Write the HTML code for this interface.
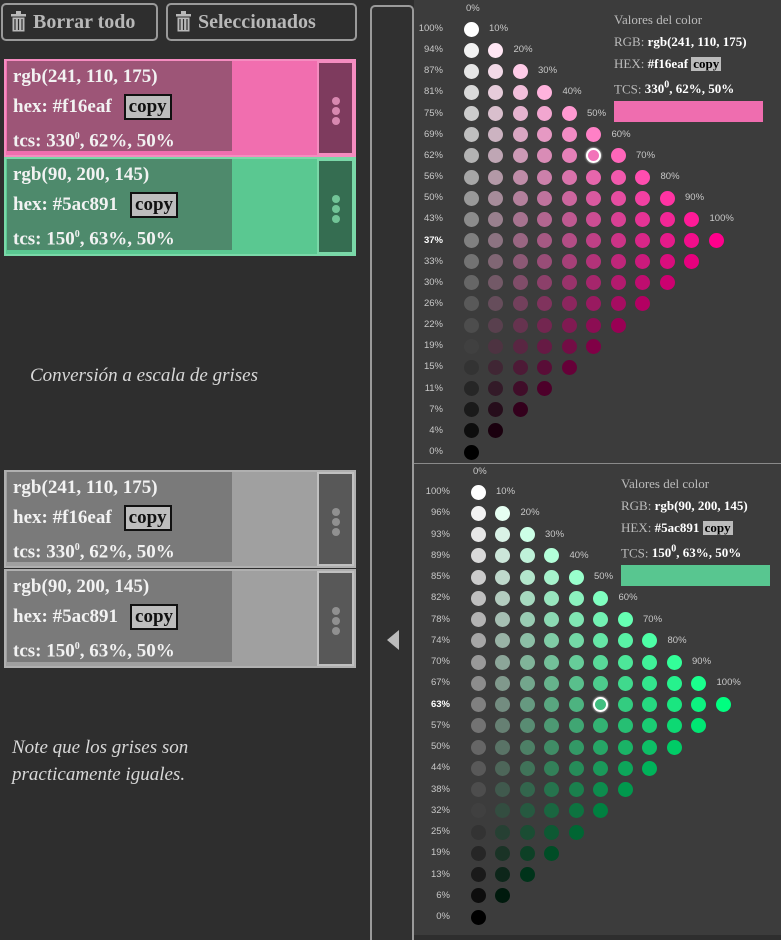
<!DOCTYPE html>
<html><head><meta charset="utf-8">
<style>
*{margin:0;padding:0;box-sizing:border-box}
body{width:781px;height:935px;background:#2e2e2e;position:relative;overflow:hidden;font-family:"Liberation Serif",serif}
.abs{position:absolute}
.btn{position:absolute;top:3px;height:38px;border:2px solid #9a9a9a;border-radius:5px;color:#b8b8b8;font-weight:bold;font-size:20px;line-height:34px;padding-left:30px}
.trash{position:absolute;left:8px;top:6px;width:15px;height:21px}
.card{position:absolute;left:4px;width:352px}
.txt{position:absolute;left:3px;top:2px;width:225px;color:#f2f2f2;font-size:19px;font-weight:bold;line-height:30px;padding:1px 6px}
.copy{display:inline-block;background:#bdbdbd;color:#111;border:2px solid #111;padding:0 3px;line-height:22px;margin-left:12px;font-size:19px}
.dots{position:absolute;right:2px;top:2px;width:37px;border:2px solid}
.dots i{position:absolute;left:13px;width:8px;height:8px;border-radius:50%}
.hand{position:absolute;color:#d8d8d8;font-family:"Liberation Serif",serif;font-style:italic;font-size:19px;line-height:27px}
.right{position:absolute;left:414px;width:367px;background:#3c3c3c}
.lbl{position:absolute;color:#c8c8c8;font-family:"Liberation Sans",sans-serif;font-size:9.5px;line-height:10px}
.dot{position:absolute;width:15px;height:15px;border-radius:50%}
.info{position:absolute;color:#bbb;font-size:14px;line-height:22px}
.info b{color:#fff}
sup{font-size:10px}
</style></head><body>

<div class="btn" style="left:1px;width:157px">
<svg class="trash" viewBox="0 0 15 21"><rect x="0" y="3" width="15" height="2.5" fill="#b8b8b8"/><rect x="5" y="0" width="5" height="3" fill="#b8b8b8"/><rect x="1.5" y="6.5" width="12" height="14" fill="#b8b8b8"/><path d="M4 8v11M7.5 8v11M11 8v11" stroke="#2e2e2e" stroke-width="1.2"/></svg>Borrar todo</div>
<div class="btn" style="left:166px;width:191px">
<svg class="trash" viewBox="0 0 15 21"><rect x="0" y="3" width="15" height="2.5" fill="#b8b8b8"/><rect x="5" y="0" width="5" height="3" fill="#b8b8b8"/><rect x="1.5" y="6.5" width="12" height="14" fill="#b8b8b8"/><path d="M4 8v11M7.5 8v11M11 8v11" stroke="#2e2e2e" stroke-width="1.2"/></svg>Seleccionados</div>

<div class="card" style="top:59px;height:98px;background:#f16eaf;border:2px solid #f58cc0">
 <div class="txt" style="background:#9d5577;height:90px;top:0;left:1px">rgb(241, 110, 175)<br>hex: #f16eaf<span class="copy">copy</span><br>tcs: 330<sup>0</sup>, 62%, 50%</div>
 <div class="dots" style="background:#7e3b5e;border-color:#f58cc0;height:94px;top:0;right:0"><i style="top:34px;background:#d888b0"></i><i style="top:44px;background:#d888b0"></i><i style="top:54px;background:#d888b0"></i></div>
</div>
<div class="card" style="top:157px;height:99px;background:#5ac891;border:2px solid #7ad8a8">
 <div class="txt" style="background:#4e8a6c;height:91px;top:0;left:1px">rgb(90, 200, 145)<br>hex: #5ac891<span class="copy">copy</span><br>tcs: 150<sup>0</sup>, 63%, 50%</div>
 <div class="dots" style="background:#356d51;border-color:#7ad8a8;height:95px;top:0;right:0"><i style="top:34px;background:#72c497"></i><i style="top:44px;background:#72c497"></i><i style="top:54px;background:#72c497"></i></div>
</div>

<div class="hand" style="left:30px;top:362px">Conversión a escala de grises</div>

<div class="card" style="top:470px;height:98px;background:#a0a0a0;border:2px solid #b0b0b0">
 <div class="txt" style="background:#7a7a7a;height:90px;top:0;left:1px">rgb(241, 110, 175)<br>hex: #f16eaf<span class="copy">copy</span><br>tcs: 330<sup>0</sup>, 62%, 50%</div>
 <div class="dots" style="background:#585858;border-color:#c0c0c0;height:94px;top:0;right:0"><i style="top:34px;background:#909090"></i><i style="top:44px;background:#909090"></i><i style="top:54px;background:#909090"></i></div>
</div>
<div class="card" style="top:569px;height:99px;background:#a0a0a0;border:2px solid #b0b0b0">
 <div class="txt" style="background:#7a7a7a;height:91px;top:0;left:1px">rgb(90, 200, 145)<br>hex: #5ac891<span class="copy">copy</span><br>tcs: 150<sup>0</sup>, 63%, 50%</div>
 <div class="dots" style="background:#585858;border-color:#c0c0c0;height:95px;top:0;right:0"><i style="top:34px;background:#909090"></i><i style="top:44px;background:#909090"></i><i style="top:54px;background:#909090"></i></div>
</div>

<div class="hand" style="left:12px;top:734px">Note que los grises son<br>practicamente iguales.</div>

<div class="abs" style="left:370px;top:5px;width:44px;height:935px;border:2px solid #9a9a9a;border-bottom:none;border-radius:5px 5px 0 0;background:#303030"></div>
<div class="abs" style="left:387px;top:630px;width:0;height:0;border-top:10px solid transparent;border-bottom:10px solid transparent;border-right:12px solid #bbb"></div>

<div class="right" style="top:0;height:463px"></div>
<div class="right" style="top:463px;height:472px;border-top:1px solid #8a8a8a"></div>

<div id="tri"></div>

<div class="info" style="left:614px;top:9px;font-size:13px">Valores del color<br>RGB: <b>rgb(241, 110, 175)</b><br>HEX: <b>#f16eaf</b> <span style="background:#bbb;color:#000;font-weight:bold;padding:0 2px;line-height:14px;display:inline-block">copy</span><br>TCS: <b>330<sup>0</sup>, 62%, 50%</b></div>
<div class="abs" style="left:614px;top:101px;width:149px;height:21px;background:#ef6daf"></div>

<div class="info" style="left:621px;top:473px;font-size:13px">Valores del color<br>RGB: <b>rgb(90, 200, 145)</b><br>HEX: <b>#5ac891</b> <span style="background:#bbb;color:#000;font-weight:bold;padding:0 2px;line-height:14px;display:inline-block">copy</span><br>TCS: <b>150<sup>0</sup>, 63%, 50%</b></div>
<div class="abs" style="left:621px;top:565px;width:149px;height:21px;background:#58c690"></div>

<script>
function tri(x0,y0,dx,dy,pure,labels,sel,lblx){
 var h='';
 h+='<div class="lbl" style="left:'+(x0-5)+'px;top:'+(y0-25)+'px">0%</div>';
 for(var r=0;r<21;r++){
  var y=y0+r*dy;
  var bold=(r==10)?'font-weight:bold;color:#fff;':'';
  h+='<div class="lbl" style="'+bold+'left:'+(lblx-40)+'px;width:40px;text-align:right;top:'+(y-5)+'px">'+labels[r]+'%</div>';
  var n=Math.min(r,20-r);
  for(var c=0;c<=n;c++){
   var w=(20-r-c)/20,p=c/10;
   var col=[0,1,2].map(function(i){return Math.round(w*255+p*pure[i]);});
   var x=x0+c*dx;
   var ring=(sel[0]==r&&sel[1]==c)?'border:2px solid #fff;box-shadow:0 0 2px #fff;':'';
   h+='<div class="dot" style="'+ring+'left:'+(x-7.5)+'px;top:'+(y-7.5)+'px;background:rgb('+col.join(',')+')"></div>';
  }
  if(r>=1&&r<=10) h+='<div class="lbl" style="left:'+(x0+(r-1)*dx+18)+'px;top:'+(y-5-dy)+'px">'+(r*10)+'%</div>';
 }
 return h;
}
document.getElementById('tri').innerHTML=
 tri(471,29,24.5,21.15,[255,0,140],[100,94,87,81,75,69,62,56,50,43,37,33,30,26,22,19,15,11,7,4,0],[6,5],443)+
 tri(478,492,24.5,21.25,[0,255,128],[100,96,93,89,85,82,78,74,70,67,63,57,50,44,38,32,25,19,13,6,0],[10,5],450);
</script>
</body></html>
